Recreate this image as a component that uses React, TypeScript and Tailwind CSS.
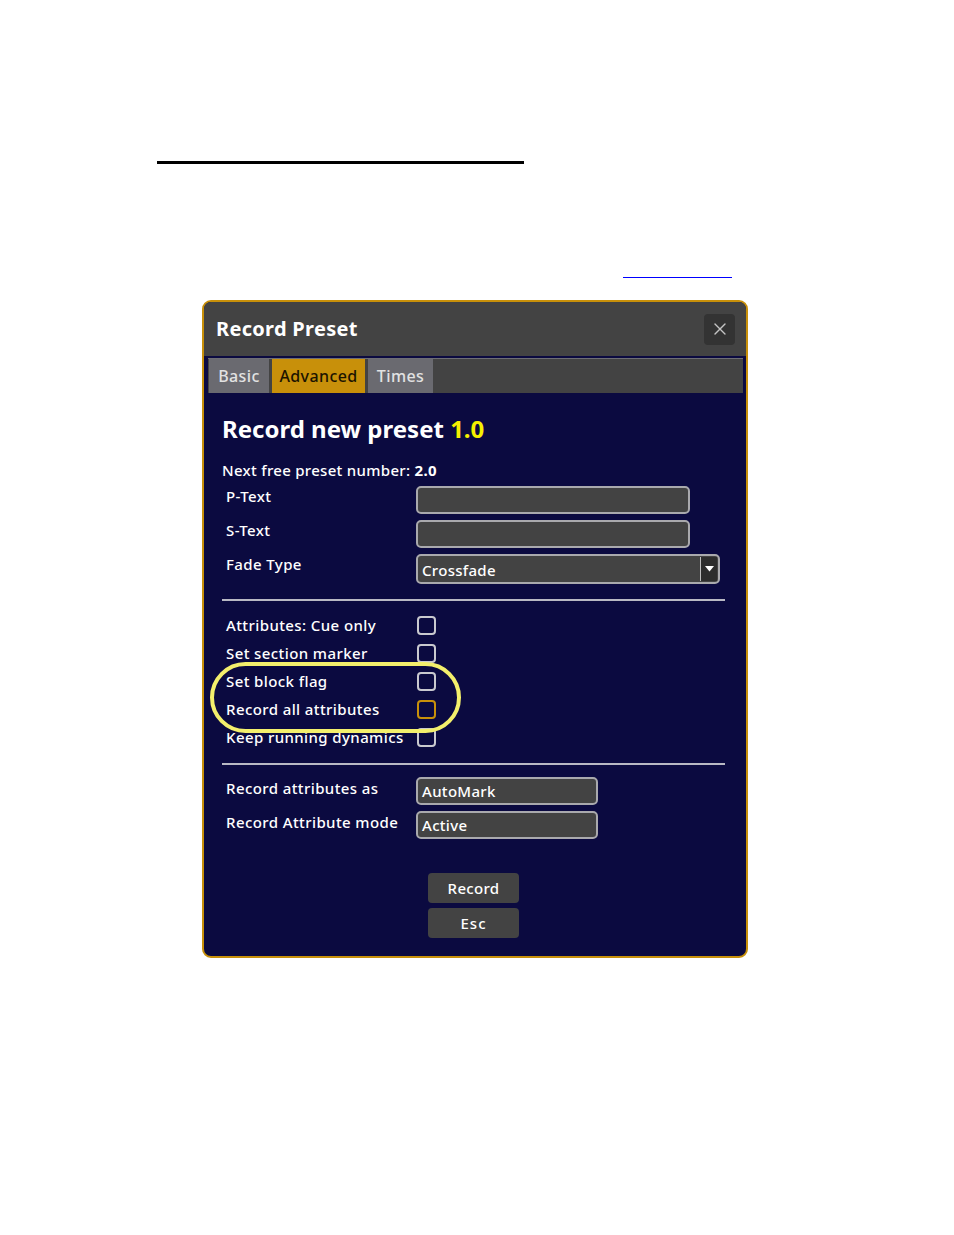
import { X } from "lucide-react";

const font = { fontFamily: '"Noto Sans", "Open Sans", sans-serif' };

const TextField = ({ value = "", width }: { value?: string; width: string }) => (
  <div
    className={`${width} h-[28px] rounded-[5px] border-2 border-[#a9a9ad] bg-[#434343] pl-[4px] text-[15px] font-medium leading-[24px] tracking-[0.3px] text-white`}
  >
    {value}
  </div>
);

const CheckRow = ({ label, orange }: { label: string; orange?: boolean }) => (
  <div className="flex h-[28px] items-center pl-[4px]">
    <span className="w-[191px] text-[15px] font-medium tracking-[0.4px] text-white">{label}</span>
    <span
      className={`h-[19px] w-[19px] rounded-[4px] border-2 ${orange ? "border-[#c8900a]" : "border-[#c9c9cf]"}`}
    />
  </div>
);

const Divider = () => <div className="mr-[21px] h-[2px] bg-[#b9b9c4]" />;

export default function App() {
  return (
    <div className="min-h-[1235px] w-[954px] bg-white" style={font}>
      <div className="pt-[161px] pl-[157px]">
        <div className="h-[3px] w-[367px] bg-black" />
      </div>
      <div className="ml-[623px] mt-[113px] h-px w-[109px] bg-[#0000ff]" />

      {/* dialog */}
      <div className="ml-[202px] mt-[22px] w-[546px] rounded-[9px] border-2 border-[#c8900a] bg-[#0b0a40]">
        <div className="flex h-[54px] items-center justify-between rounded-t-[7px] bg-[#434343] pl-[12px] pr-[11px]">
          <span className="text-[20px] font-bold tracking-[0.3px] text-white">Record Preset</span>
          <span className="flex h-[31px] w-[31px] items-center justify-center rounded-[4px] bg-[#333333]">
            <X className="h-[20px] w-[20px] text-[#c4c4c4]" strokeWidth={1.6} />
          </span>
        </div>

        <div className="ml-[4px] mr-[3px] mt-[2px] flex h-[35px] gap-[3px] border-t border-[#6e6e74] bg-[#434343] pl-px text-[16px] font-medium tracking-[0.4px]">
          <span className="flex w-[60px] items-center justify-center bg-[#6a6a70] text-[#e2e2e2]">Basic</span>
          <span className="flex w-[93px] items-center justify-center bg-[#c8900a] text-[#1c1400]">Advanced</span>
          <span className="flex w-[65px] items-center justify-center bg-[#6a6a70] text-[#e2e2e2]">Times</span>
        </div>

        <div className="relative pl-[18px] pb-[18px]">
          <div className="pt-[20px] text-[24px] font-bold leading-[32px] text-white">
            Record new preset <span className="text-[#f5f000]">1.0</span>
          </div>
          <div className="mt-[15px] text-[15px] font-medium leading-[20px] tracking-[0.3px] text-white">
            Next free preset number: <span className="font-bold">2.0</span>
          </div>

          <div className="mt-[6px] flex flex-col gap-[6px]">
            <div className="flex items-start pl-[4px]">
              <span className="w-[190px] text-[15px] font-medium leading-[20px] tracking-[0.4px] text-white">P-Text</span>
              <TextField width="w-[274px]" />
            </div>
            <div className="flex items-start pl-[4px]">
              <span className="w-[190px] text-[15px] font-medium leading-[20px] tracking-[0.4px] text-white">S-Text</span>
              <TextField width="w-[274px]" />
            </div>
            <div className="flex items-start pl-[4px]">
              <span className="w-[190px] text-[15px] font-medium leading-[20px] tracking-[0.4px] text-white">Fade Type</span>
              <div className="flex h-[30px] w-[304px] items-center rounded-[5px] border-2 border-[#a9a9ad] bg-[#434343] pl-[4px] text-[15px] font-medium tracking-[0.3px] text-white">
                <span className="flex-1 pt-[2px]">Crossfade</span>
                <span className="mr-px flex h-[24px] w-[17px] items-center justify-center border-l border-[#bdbdbd] bg-[#2d2d2d]">
                  <svg width="9" height="6" viewBox="0 0 9 6">
                    <path d="M0 0 L9 0 L4.5 5.5 Z" fill="#ffffff" />
                  </svg>
                </span>
              </div>
            </div>
          </div>

          <div className="mt-[15px]">
            <Divider />
          </div>

          <div className="mt-[10px]">
            <CheckRow label="Attributes: Cue only" />
            <CheckRow label="Set section marker" />
            <CheckRow label="Set block flag" />
            <CheckRow label="Record all attributes" orange />
            <CheckRow label="Keep running dynamics" />
          </div>

          <div className="mt-[12px]">
            <Divider />
          </div>

          <div className="mt-[12px] flex flex-col gap-[6px]">
            <div className="flex items-start pl-[4px]">
              <span className="w-[190px] pt-px text-[15px] font-medium leading-[20px] tracking-[0.4px] text-white">Record attributes as</span>
              <TextField width="w-[182px]" value="AutoMark" />
            </div>
            <div className="flex items-start pl-[4px]">
              <span className="w-[190px] pt-px text-[15px] font-medium leading-[20px] tracking-[0.4px] text-white">Record Attribute mode</span>
              <TextField width="w-[182px]" value="Active" />
            </div>
          </div>

          <div className="ml-[206px] mt-[34px] flex w-[91px] flex-col gap-[5px]">
            <span className="flex h-[30px] items-center justify-center rounded-[4px] bg-[#434343] text-[15px] font-medium tracking-[0.3px] text-white">Record</span>
            <span className="flex h-[30px] items-center justify-center rounded-[4px] bg-[#434343] text-[15px] font-medium tracking-[1px] text-white">Esc</span>
          </div>

          {/* highlight ring */}
          <div className="absolute left-[6px] top-[269px] h-[71px] w-[251px] rounded-[36px] border-[4px] border-[#f3ef6c]" />
        </div>
      </div>
    </div>
  );
}
